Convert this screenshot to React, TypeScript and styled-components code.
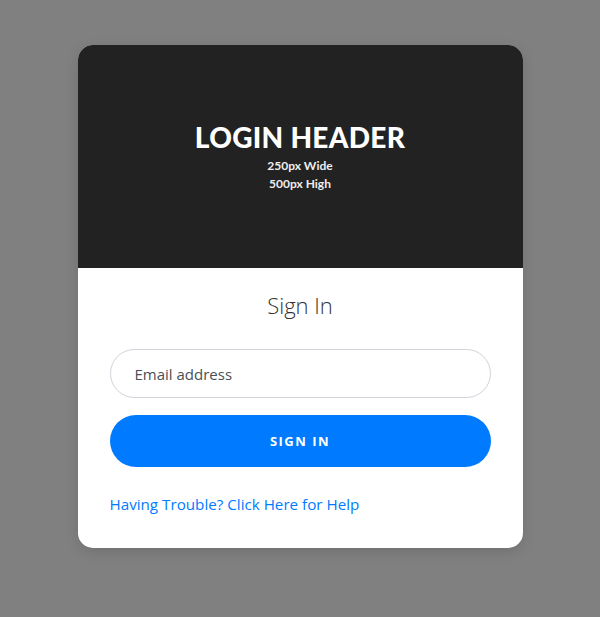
import styled, { createGlobalStyle } from 'styled-components';

const GlobalStyle = createGlobalStyle`
  html, body {
    margin: 0;
    padding: 0;
    background-color: #808080;
    font-family: 'Open Sans', 'Liberation Sans', sans-serif;
  }
  * {
    box-sizing: border-box;
  }
`;

const Page = styled.div`
  min-height: 617px;
  display: flex;
  justify-content: center;
  padding-top: 45px;
`;

const Card = styled.div`
  width: 445px;
  height: 503px;
  background-color: #fff;
  border-radius: 15px;
  overflow: hidden;
  box-shadow: 0 4px 14px rgba(0, 0, 0, 0.12);
  display: flex;
  flex-direction: column;
`;

const Header = styled.div`
  height: 223px;
  background-color: #222222;
  color: #fff;
  display: flex;
  flex-direction: column;
  align-items: center;
  justify-content: center;
  padding-bottom: 4px;
  font-family: Lato, 'Liberation Sans', sans-serif;
`;

const HeaderTitle = styled.div`
  font-size: 28px;
  font-weight: 900;
  line-height: 40px;
  letter-spacing: 0.3px;
`;

const HeaderSub = styled.div`
  font-size: 12px;
  font-weight: 700;
  line-height: 18px;
  color: #eee;
`;

const Body = styled.div`
  padding: 22px 32px 32px;
  display: flex;
  flex-direction: column;
`;

const Title = styled.h2`
  margin: 0 0 29px;
  font-size: 22px;
  font-weight: 300;
  line-height: 30px;
  text-align: center;
  color: #333;
`;

const Input = styled.input`
  height: 49px;
  width: 100%;
  border: 1px solid #ced4da;
  border-radius: 25px;
  padding: 0 24px;
  font-family: inherit;
  font-size: 15px;
  color: #495057;
  outline: none;
  &::placeholder {
    color: #495057;
  }
`;

const Button = styled.button`
  margin-top: 17px;
  height: 52px;
  width: 100%;
  border: none;
  border-radius: 26px;
  background-color: #007bff;
  color: #fff;
  font-family: inherit;
  font-size: 13px;
  font-weight: 700;
  letter-spacing: 1.5px;
  cursor: pointer;
`;

const HelpLink = styled.a`
  margin-top: 25px;
  font-size: 15.2px;
  line-height: 24px;
  color: #007bff;
  text-decoration: none;
`;

export default function App() {
  return (
    <>
      <GlobalStyle />
      <Page>
        <Card>
          <Header>
            <HeaderTitle>LOGIN HEADER</HeaderTitle>
            <HeaderSub>250px Wide</HeaderSub>
            <HeaderSub>500px High</HeaderSub>
          </Header>
          <Body>
            <Title>Sign In</Title>
            <Input type="email" placeholder="Email address" />
            <Button>SIGN IN</Button>
            <HelpLink href="#">Having Trouble? Click Here for Help</HelpLink>
          </Body>
        </Card>
      </Page>
    </>
  );
}
